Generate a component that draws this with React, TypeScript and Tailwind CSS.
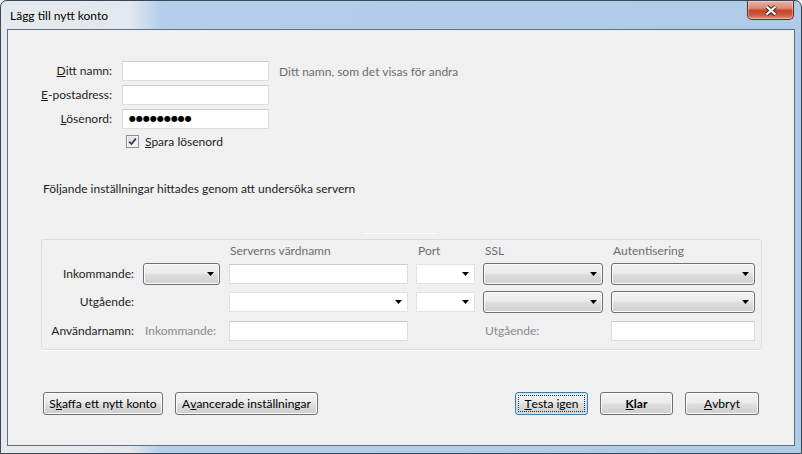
import React from "react";

function Arrow() {
  return (
    <svg width="7" height="4" viewBox="0 0 7 4">
      <path d="M0 0H7L3.5 4Z" fill="#000" />
    </svg>
  );
}

function GrayCombo({ w }: { w: string }) {
  return (
    <div
      className={`${w} flex h-[22px] items-center justify-end rounded-[3px] border border-[#707070] bg-[linear-gradient(#f3f3f3,#ebebeb_45%,#dddddd_55%,#cfcfcf)] pr-[5px] shadow-[inset_0_0_0_1px_#fbfbfb]`}
    >
      <Arrow />
    </div>
  );
}

function WhiteCombo({ w }: { w: string }) {
  return (
    <div className={`${w} flex h-[20px] items-center justify-end border border-[#dfe3e8] bg-white pr-[5px]`}>
      <Arrow />
    </div>
  );
}

function Field({ w, children }: { w: string; children?: React.ReactNode }) {
  return (
    <div className={`${w} flex h-[20px] items-center border border-[#dadee4] border-t-[#c9cdd3] bg-white pl-[5px]`}>
      {children}
    </div>
  );
}

function Btn({
  w,
  children,
  focus,
  bold,
}: {
  w: string;
  children: React.ReactNode;
  focus?: boolean;
  bold?: boolean;
}) {
  return (
    <div
      className={`${w} flex h-[23px] items-stretch rounded-[3px] border ${
        focus ? "border-[#3c7fb1] shadow-[inset_0_0_0_1px_#c4e5f6]" : "border-[#707070] shadow-[inset_0_0_0_1px_#fbfbfb]"
      } bg-[linear-gradient(#f3f3f3,#ebebeb_45%,#dddddd_55%,#cfcfcf)] text-black ${bold ? "font-bold" : ""}`}
    >
      <span
        className={`flex flex-1 items-center justify-center leading-[16px] ${
          focus ? "m-[2px] border border-dotted border-[#333]" : ""
        }`}
      >
        {children}
      </span>
    </div>
  );
}

function CloseButton() {
  return (
    <div className="mr-[1px] flex h-[19px] w-[47px] items-center justify-center rounded-b-[5px] border border-t-0 border-[#6b2a1e] bg-[linear-gradient(#eab1a3,#dc8a74_40%,#c6452b_52%,#c9553a_75%,#de9479)] shadow-[inset_0_0_0_1px_rgba(255,255,255,0.35)]">
      <svg width="14" height="11" viewBox="0 0 14 11">
        <path d="M2.5 1.5L11.5 9.5M11.5 1.5L2.5 9.5" stroke="#3b2622" strokeWidth="4.2" />
        <path d="M2.5 1.5L11.5 9.5M11.5 1.5L2.5 9.5" stroke="#fff" strokeWidth="2.3" />
      </svg>
    </div>
  );
}

export default function App() {
  return (
    <div className="h-[454px] w-[802px] overflow-hidden bg-[#f0f0f0]">
      <div className="flex h-[454px] flex-col rounded-t-[7px] border border-[#3a4756] bg-[linear-gradient(90deg,#e6eaef_0%,#e3e8ee_16%,#b4cfeb_20%,#aecbe8_100%)] px-[6px] pb-[7px] font-['Lato',sans-serif] text-[12px] text-[#1e1e1e]">
        {/* title bar */}
        <div className="flex h-[28px] items-start justify-between">
          <span className="pl-[3px] pt-[7px] leading-[16px] text-black">Lägg till nytt konto</span>
          <CloseButton />
        </div>

        {/* client area */}
        <div className="flex flex-1 flex-col border border-[#5f6f80] bg-[#f0f0f0]">
          <div className="flex flex-col gap-[4px] pt-[31px]">
            <div className="flex h-[20px] items-center">
              <span className="w-[104px] text-right">
                <u>D</u>itt namn:
              </span>
              <div className="ml-[10px]">
                <Field w="w-[147px]" />
              </div>
              <span className="ml-[10px] pt-[1px] text-[#6d6d6d]">Ditt namn, som det visas för andra</span>
            </div>
            <div className="flex h-[20px] items-center">
              <span className="w-[104px] text-right">
                <u>E</u>-postadress:
              </span>
              <div className="ml-[10px]">
                <Field w="w-[147px]" />
              </div>
            </div>
            <div className="flex h-[20px] items-center">
              <span className="w-[104px] text-right">
                <u>L</u>ösenord:
              </span>
              <div className="ml-[10px]">
                <Field w="w-[147px]">
                  <span className="pl-[1px] font-['DejaVu_Sans',sans-serif] text-[8px] text-black">
                    ●●●●●●●●●
                  </span>
                </Field>
              </div>
            </div>
          </div>

          <div className="mt-[6px] flex h-[13px] items-center pl-[118px]">
            <span className="flex h-[13px] w-[13px] items-center justify-center border border-[#8e8f8f] bg-[linear-gradient(135deg,#d8d8d8,#fafafa)] shadow-[inset_0_0_0_1px_#f4f4f4]">
              <svg width="9" height="9" viewBox="0 0 9 9">
                <path d="M1.2 4.6L3.5 7L7.8 1.6" fill="none" stroke="#2d3c5e" strokeWidth="1.8" />
              </svg>
            </span>
            <span className="ml-[6px] pt-[1px] leading-[16px]">
              <u>S</u>para lösenord
            </span>
          </div>

          <div className="mt-[33px] pl-[35px] leading-[16px]">
            Följande inställningar hittades genom att undersöka servern
          </div>

          <div className="ml-[355px] mt-[36px] h-px w-[74px] bg-white" />

          {/* settings group */}
          <div className="ml-[33px] mt-[5px] flex h-[111px] w-[721px] flex-col rounded-[3px] border border-[#d5dfe5] pt-[3px] shadow-[0_1px_0_#fff]">
            <div className="flex h-[16px] items-center leading-[16px] text-[#6d6d6d]">
              <span className="w-[92px]" />
              <span className="ml-[9px] w-[77px]" />
              <span className="ml-[9px] w-[179px] pl-[1px]">Serverns värdnamn</span>
              <span className="ml-[8px] w-[59px] pl-[2px]">Port</span>
              <span className="ml-[8px] w-[120px] pl-[2px]">SSL</span>
              <span className="ml-[8px] w-[144px] pl-[2px]">Autentisering</span>
            </div>

            <div className="mt-[4px] flex h-[22px] items-center">
              <span className="w-[92px] text-right">Inkommande:</span>
              <div className="ml-[9px]">
                <GrayCombo w="w-[77px]" />
              </div>
              <div className="ml-[9px]">
                <Field w="w-[179px]" />
              </div>
              <div className="ml-[8px]">
                <WhiteCombo w="w-[59px]" />
              </div>
              <div className="ml-[8px]">
                <GrayCombo w="w-[120px]" />
              </div>
              <div className="ml-[8px]">
                <GrayCombo w="w-[144px]" />
              </div>
            </div>

            <div className="mt-[6px] flex h-[22px] items-center">
              <span className="w-[92px] text-right">Utgående:</span>
              <span className="ml-[9px] w-[77px]" />
              <div className="ml-[9px]">
                <WhiteCombo w="w-[179px]" />
              </div>
              <div className="ml-[8px]">
                <WhiteCombo w="w-[59px]" />
              </div>
              <div className="ml-[8px]">
                <GrayCombo w="w-[120px]" />
              </div>
              <div className="ml-[8px]">
                <GrayCombo w="w-[144px]" />
              </div>
            </div>

            <div className="mt-[8px] flex h-[20px] items-center">
              <span className="w-[92px] text-right">Användarnamn:</span>
              <span className="ml-[9px] w-[77px] pl-[2px] text-[#8a8a8a]">Inkommande:</span>
              <div className="ml-[9px]">
                <Field w="w-[179px]" />
              </div>
              <span className="ml-[8px] w-[59px]" />
              <span className="ml-[8px] w-[120px] pl-[2px] text-[#8a8a8a]">Utgående:</span>
              <div className="ml-[8px]">
                <Field w="w-[144px]" />
              </div>
            </div>
          </div>

          {/* buttons */}
          <div className="mt-[42px] flex items-center justify-between px-[35px]">
            <div className="flex gap-[12px]">
              <Btn w="w-[120px]">
                S<u>k</u>affa ett nytt konto
              </Btn>
              <Btn w="w-[143px]">
                A<u>v</u>ancerade inställningar
              </Btn>
            </div>
            <div className="flex gap-[12px]">
              <Btn w="w-[73px]" focus>
                <u>T</u>esta igen
              </Btn>
              <Btn w="w-[73px]" bold>
                <u>K</u>lar
              </Btn>
              <Btn w="w-[74px]">
                <u>A</u>vbryt
              </Btn>
            </div>
          </div>
        </div>
      </div>
    </div>
  );
}
